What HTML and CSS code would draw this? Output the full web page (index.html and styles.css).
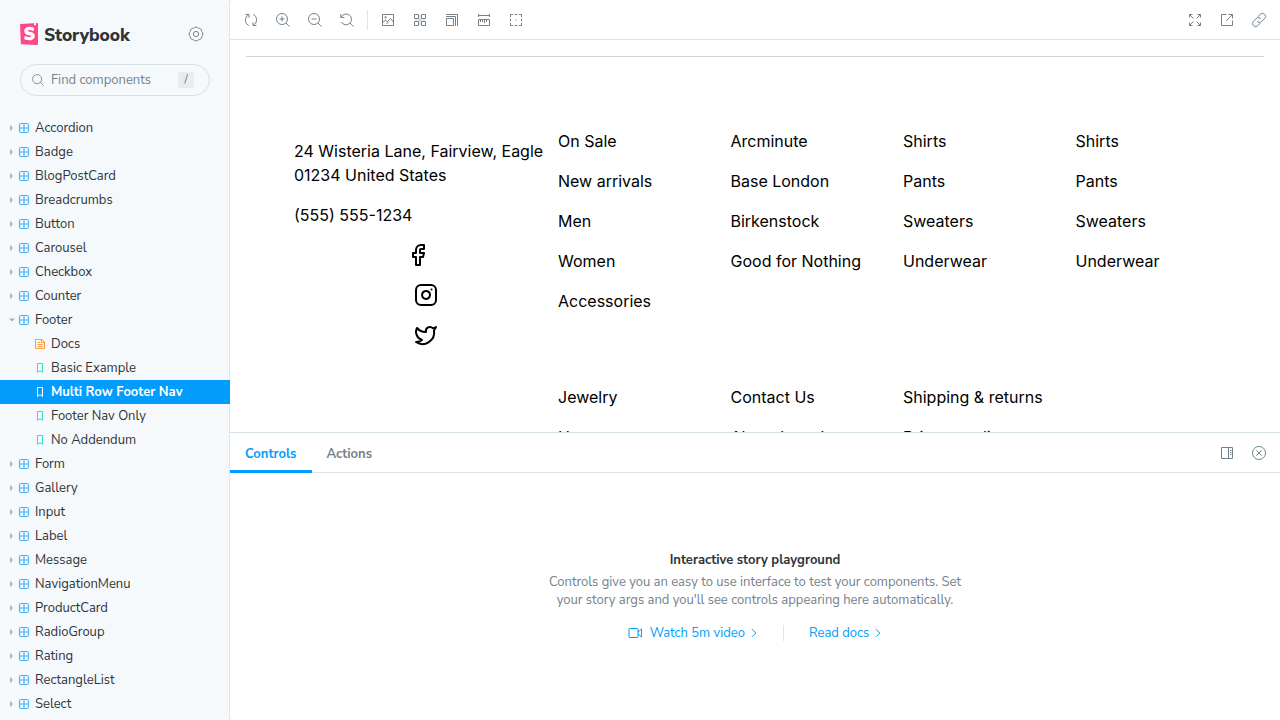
FILE: index.html
```html
<!DOCTYPE html>
<html lang="en">
<head>
<meta charset="utf-8">
<title>Storybook</title>
<link rel="stylesheet" href="styles.css">
</head>
<body>
<svg class="sprite" aria-hidden="true">
  <symbol id="component" viewBox="0 0 12 12"><rect x="1.5" y="1.5" width="9" height="9" rx="1.8"/><path d="M6 1.5v9M1.5 6h9"/></symbol>
  <symbol id="bookmark" viewBox="0 0 12 12"><path d="M3.5 1.5h5v9L6 8.6l-2.500 1.900z"/></symbol>
  <symbol id="chevron" viewBox="0 0 8 8"><path d="M2 .2 5.800 4 2 7.800"/></symbol>
</svg>
<div class="app">
  <aside class="sidebar">
    <header class="brand">
      <svg class="brand-mark" width="18" height="22" viewBox="0 0 18 22"><path fill="#ff4785" d="M0 1.900Q0 1 .9 1L17 0q1 0 1 1v20q0 1-1 1L1.700 21.300Q.8 21.200.8 20.300z"/><path fill="#fff" d="M14 .2 16 0v2.600l-1-.7-1 .6z"/><text x="9.200" y="17.400">S</text></svg>
      <span class="brand-name">Storybook</span>
      <svg class="icon gear" width="16" height="16" viewBox="0 0 16 16"><path d="M13.730 5.630A3 3 0 0 1 13.730 10.370A3 3 0 0 1 10.370 13.730A3 3 0 0 1 5.630 13.730A3 3 0 0 1 2.270 10.370A3 3 0 0 1 2.270 5.630A3 3 0 0 1 5.630 2.270A3 3 0 0 1 10.370 2.270A3 3 0 0 1 13.730 5.630z"/><circle cx="8" cy="8" r="2.600"/></svg>
    </header>
    <div class="search">
      <svg class="icon" viewBox="0 0 14 14"><circle cx="6" cy="6" r="5.300"/><path d="m9.700 9.700 3.800 3.800"/></svg>
      <span class="search-label">Find components</span>
      <kbd>/</kbd>
    </div>
    <nav class="tree">
      <a class="node"><i class="caret"></i><svg class="comp"><use href="#component"/></svg><span>Accordion</span></a>
      <a class="node"><i class="caret"></i><svg class="comp"><use href="#component"/></svg><span>Badge</span></a>
      <a class="node"><i class="caret"></i><svg class="comp"><use href="#component"/></svg><span>BlogPostCard</span></a>
      <a class="node"><i class="caret"></i><svg class="comp"><use href="#component"/></svg><span>Breadcrumbs</span></a>
      <a class="node"><i class="caret"></i><svg class="comp"><use href="#component"/></svg><span>Button</span></a>
      <a class="node"><i class="caret"></i><svg class="comp"><use href="#component"/></svg><span>Carousel</span></a>
      <a class="node"><i class="caret"></i><svg class="comp"><use href="#component"/></svg><span>Checkbox</span></a>
      <a class="node"><i class="caret"></i><svg class="comp"><use href="#component"/></svg><span>Counter</span></a>
      <a class="node"><i class="caret open"></i><svg class="comp"><use href="#component"/></svg><span>Footer</span></a>
      <a class="node leaf"><svg class="docs" viewBox="0 0 12 12"><path d="M1.500 1.500h6.500l2.500 2.500v6.500h-9zM7.500 1.500v3h3M3.500 4.500H6M3.500 6.500h5M3.500 8.500h5"/></svg><span>Docs</span></a>
      <a class="node leaf"><svg class="story"><use href="#bookmark"/></svg><span>Basic Example</span></a>
      <a class="node leaf selected"><svg class="story"><use href="#bookmark"/></svg><span>Multi Row Footer Nav</span></a>
      <a class="node leaf"><svg class="story"><use href="#bookmark"/></svg><span>Footer Nav Only</span></a>
      <a class="node leaf"><svg class="story"><use href="#bookmark"/></svg><span>No Addendum</span></a>
      <a class="node"><i class="caret"></i><svg class="comp"><use href="#component"/></svg><span>Form</span></a>
      <a class="node"><i class="caret"></i><svg class="comp"><use href="#component"/></svg><span>Gallery</span></a>
      <a class="node"><i class="caret"></i><svg class="comp"><use href="#component"/></svg><span>Input</span></a>
      <a class="node"><i class="caret"></i><svg class="comp"><use href="#component"/></svg><span>Label</span></a>
      <a class="node"><i class="caret"></i><svg class="comp"><use href="#component"/></svg><span>Message</span></a>
      <a class="node"><i class="caret"></i><svg class="comp"><use href="#component"/></svg><span>NavigationMenu</span></a>
      <a class="node"><i class="caret"></i><svg class="comp"><use href="#component"/></svg><span>ProductCard</span></a>
      <a class="node"><i class="caret"></i><svg class="comp"><use href="#component"/></svg><span>RadioGroup</span></a>
      <a class="node"><i class="caret"></i><svg class="comp"><use href="#component"/></svg><span>Rating</span></a>
      <a class="node"><i class="caret"></i><svg class="comp"><use href="#component"/></svg><span>RectangleList</span></a>
      <a class="node"><i class="caret"></i><svg class="comp"><use href="#component"/></svg><span>Select</span></a>
    </nav>
  </aside>
  <main class="main">
    <div class="toolbar">
      <svg class="icon" viewBox="0 0 14 14"><path d="M4.800 12.600A6 6 0 0 1 4.600 1.800M1.600 1.500h3.400v3.300M9.200 1.400A6 6 0 0 1 9.400 12.200M12.400 12.500H9V9.200"/></svg>
      <svg class="icon" viewBox="0 0 14 14"><circle cx="6" cy="6" r="5.500"/><path d="m9.800 9.800 3.800 3.800M6 3.500v5M3.500 6h5"/></svg>
      <svg class="icon" viewBox="0 0 14 14"><circle cx="6" cy="6" r="5.500"/><path d="m9.800 9.800 3.800 3.800M3.500 6h5"/></svg>
      <svg class="icon" viewBox="0 0 14 14"><path d="M.8 1v3.500H4.300M1.200 4.200a5.400 5.400 0 1 1 .2 4.800M9.800 9.800l3.800 3.800"/></svg>
      <span class="divider"></span>
      <svg class="icon" viewBox="0 0 14 14"><path d="M1.500 1.500h11v11h-11zM1.500 9.500l3-2.500 2 2 3-3.500 3 3.500M5.500 11l2-2"/><circle cx="4.500" cy="4.300" r=".7"/></svg>
      <svg class="icon" viewBox="0 0 14 14"><path d="M1.500 1.500h4v4h-4zM8.500 1.500h4v4h-4zM1.500 8.500h4v4h-4zM8.500 8.500h4v4h-4z"/><path class="soft" d="M7 2v10M2 7h10"/></svg>
      <svg class="icon" viewBox="0 0 14 14"><path d="M1.500 5.500h7v7h-7zM1 3.500h9.500V13M1 1.500h11.500V13"/></svg>
      <svg class="icon" viewBox="0 0 14 14"><path d="M1.500 1v3M12.500 1v3M1.500 2.500h11M1.500 6.500h11v6h-11zM3.500 7v2M5.500 7v2M7.500 7v3M9.500 7v2"/></svg>
      <svg class="icon" viewBox="0 0 14 14"><path d="M1.500 4V1.500H4M10 1.500h2.500V4M12.500 10v2.500H10M4 12.500H1.500V10M5.500 1.500h3M5.500 12.500h3M1.500 5.500v3M12.500 5.500v3M6.500 7h1"/></svg>
      <span class="spacer"></span>
      <svg class="icon" viewBox="0 0 14 14"><path d="M4.500 1.500h-3v3M1.500 1.500 5.500 5.500M9.500 1.500h3v3M12.500 1.500l-4 4M1.500 9.500v3h3M1.500 12.500l4-4M12.500 9.500v3h-3M12.500 12.500l-4-4"/></svg>
      <svg class="icon" viewBox="0 0 14 14"><path d="M6.500 1.500h-5v11h11v-5M8.500 1.500h4v4M12.500 1.500l-6 6"/></svg>
      <svg class="icon" viewBox="0 0 14 14"><path d="M5.600 3.900 8.300 1.300a3 3 0 0 1 4.300 4.300L9.600 8.600a2.980 2.980 0 0 1-4.500-.4M8.400 10.100 5.700 12.700A3 3 0 0 1 1.400 8.400L4.400 5.400a2.980 2.980 0 0 1 4.500.4"/></svg>
    </div>
    <section class="canvas">
      <div class="footer">
        <div class="about">
          <p>24 Wisteria Lane, Fairview, Eagle 01234 United States</p>
          <p>(555) 555-1234</p>
          <div class="social">
            <svg class="facebook" viewBox="0 0 24 24"><path d="M18 2h-3a5 5 0 0 0-5 5v3H7v4h3v8h4v-8h3l1-4h-4V7a1 1 0 0 1 1-1h3z"/></svg>
            <svg viewBox="0 0 24 24"><rect x="2" y="2" width="20" height="20" rx="5"/><path d="M16 11.370A4 4 0 1 1 12.630 8 4 4 0 0 1 16 11.370zM17.500 6.500h.01"/></svg>
            <svg viewBox="0 0 24 24"><path d="M22 4s-.7 2.100-2 3.400c1.600 10-9.400 17.300-18 11.600 2.200.1 4.400-.6 6-2C3 15.500.5 9.600 3 5c2.200 2.600 5.600 4.100 9 4-.9-4.200 4-6.600 7-3.800 1.100 0 3-1.200 3-1.200z"/></svg>
          </div>
        </div>
        <div class="links">
          <ul><li>On Sale</li><li>New arrivals</li><li>Men</li><li>Women</li><li>Accessories</li></ul>
          <ul><li>Arcminute</li><li>Base London</li><li>Birkenstock</li><li>Good for Nothing</li></ul>
          <ul><li>Shirts</li><li>Pants</li><li>Sweaters</li><li>Underwear</li></ul>
          <ul><li>Shirts</li><li>Pants</li><li>Sweaters</li><li>Underwear</li></ul>
          <ul><li>Jewelry</li><li>Homeware</li></ul>
          <ul><li>Contact Us</li><li>About brands</li></ul>
          <ul><li>Shipping &amp; returns</li><li>Privacy policy</li></ul>
        </div>
      </div>
    </section>
    <section class="panel">
      <div class="tabs">
        <span class="tab active">Controls</span>
        <span class="tab">Actions</span>
        <span class="spacer"></span>
        <svg class="icon" viewBox="0 0 14 14"><path d="M1.500 1.500h11v11h-11zM8.500 1.500v11M10 4.500h1.500M10 6.500h1.500M10 8.500h1.500"/></svg>
        <svg class="icon" viewBox="0 0 14 14"><circle cx="7" cy="7" r="6.500"/><path d="m4.300 4.300 5.400 5.400M9.700 4.300l-5.400 5.400"/></svg>
      </div>
      <div class="empty">
        <strong>Interactive story playground</strong>
        <p>Controls give you an easy to use interface to test your components. Set<br>your story args and you'll see controls appearing here automatically.</p>
        <div class="actions">
          <a><svg class="video" viewBox="0 0 14 14"><path d="M2.500 2.500h7q.5 0 .5.500v8q0 .5-.5.500h-8q-.5 0-.5-.5V3q0-.5.500-.5zM10 6l3.500-3v8L10 8"/></svg><span>Watch 5m video</span><svg class="chev"><use href="#chevron"/></svg></a>
          <span class="divider"></span>
          <a><span>Read docs</span><svg class="chev"><use href="#chevron"/></svg></a>
        </div>
      </div>
    </section>
  </main>
</div>
</body>
</html>
```
FILE: styles.css
```css
* { box-sizing: border-box; }
body { margin: 0; width: 1280px; height: 720px; overflow: hidden; background: #f6f9fc; color: #2e3438; font-family: "Nunito Sans", Lato, sans-serif; font-size: 13px; -webkit-font-smoothing: antialiased; }
p, ul { margin: 0; padding: 0; list-style: none; }
svg { display: block; flex: none; fill: none; stroke-width: 1; overflow: visible; }
.sprite { position: absolute; width: 0; height: 0; }
.app { display: grid; grid-template-columns: 230px 1050px; height: 720px; }
.sidebar { height: 720px; overflow: hidden; box-shadow: inset -1px 0 #dfe5ea; }
.icon { width: 14px; height: 14px; stroke: #73828c; }
.icon .soft { stroke-opacity: .35; }
.spacer { flex: 1; }

.brand { display: flex; align-items: center; height: 22px; margin: 23px 26px 0 20px; }
.brand-mark text { fill: #fff; stroke: #fff; stroke-width: .5; font: 900 17px "Nunito Sans", Lato, sans-serif; text-anchor: middle; }
.brand-name { margin: 2px 0 0 6px; flex: 1; font-size: 17.500px; font-weight: 800; letter-spacing: -.1px; line-height: 22px; }
.gear { width: 16px; height: 16px; }
.search { display: flex; align-items: center; width: 190px; height: 32px; margin: 19px 0 0 20px; padding: 0 15px 0 11px; border: 1px solid #d5dfe6; border-radius: 16px; color: #73828c; }
.search .icon { width: 12px; height: 12px; }
.search-label { margin-left: 7px; flex: 1; white-space: nowrap; font-size: 13px; }
kbd { width: 16px; height: 16px; border-radius: 3px; background: #e8ecef; font: 11px/16px "Nunito Sans", Lato, sans-serif; text-align: center; color: #5c6870; }
.tree { margin-top: 20px; }
.node { display: flex; align-items: center; height: 24px; padding-left: 8px; line-height: 24px; white-space: nowrap; }
.node svg { width: 12px; height: 12px; }
.node span { margin-left: 5px; }
.caret { width: 8px; height: 8px; margin-right: 2px; background: #a6afb6; clip-path: polygon(25% 12%, 62% 50%, 25% 88%); }
.caret.open { clip-path: polygon(12% 32%, 88% 32%, 50% 70%); }
.comp { stroke: #4db6ff; stroke-width: 1.200; }
.leaf { padding-left: 34px; }
.docs { stroke: #ff9b38; }
.story { stroke: #37d5d3; }
.selected { background: #029cfd; color: #fff; font-weight: 700; }
.selected svg { stroke: #fff; }

.main { display: flex; flex-direction: column; height: 720px; overflow: hidden; background: #fff; border-radius: 5px 0 0 5px; }
.toolbar { display: flex; align-items: center; gap: 18px; height: 40px; padding: 0 14px; border-bottom: 1px solid #dfe4e8; flex: none; }
.divider { width: 1px; height: 20px; background: #dfe4e8; }
.toolbar .divider { margin: 0 -5px 0 -5px; }
.canvas { height: 392px; padding: 16px 16px 0; overflow: hidden; flex: none; color: #000; font: 16px/24px Inter, sans-serif; }
.footer { display: grid; grid-template-columns: 264px 690px; height: 420px; padding: 72px 0 0 48px; border-top: 1px solid #cdd6dc; }
.about { padding-top: 10px; }
.about p { width: 258px; margin-bottom: 16px; }
.social { display: flex; flex-direction: column; align-items: center; gap: 16px; }
.social svg { width: 24px; height: 24px; stroke: #000; stroke-width: 2; stroke-linecap: round; stroke-linejoin: round; }
.social .facebook { margin-right: 16px; }
.links { display: grid; grid-template-columns: repeat(4, 172.500px); grid-template-rows: 256px auto; }
.links ul { display: flex; flex-direction: column; gap: 16px; }
.links li { white-space: nowrap; }

.panel { flex: 1; border-top: 1px solid #d5dfe6; }
.tabs { display: flex; align-items: center; height: 40px; padding-right: 14px; border-bottom: 1px solid #dfe4e8; }
.tabs .icon + .icon { margin-left: 18px; }
.tab { height: 40px; padding: 0 15px; border-bottom: 3px solid transparent; font-weight: 700; line-height: 42px; color: #73828c; }
.tab.active { width: 81.500px; color: #029cfd; border-color: #029cfd; }
.empty { display: flex; flex-direction: column; align-items: center; padding-top: 78px; line-height: 18px; }
.empty p { margin-top: 4px; text-align: center; white-space: nowrap; color: #73828c; }
.actions { display: flex; align-items: center; gap: 25px; margin-top: 15px; color: #029cfd; }
.actions a { display: flex; align-items: center; }
.actions svg { stroke: #029cfd; }
.actions .divider { height: 16px; }
.video { width: 14px; height: 14px; margin-right: 8px; }
.chev { width: 8px; height: 8px; margin-left: 5px; }
```
